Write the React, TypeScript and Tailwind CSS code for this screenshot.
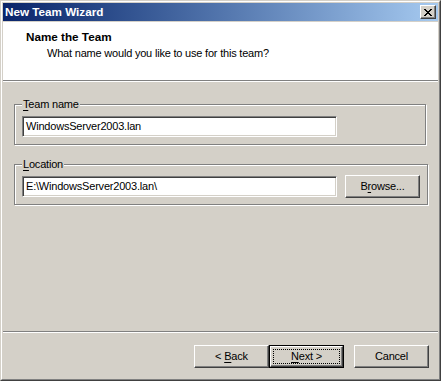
import type { ReactNode } from 'react';

function U({ children }: { children: ReactNode }) {
  return <span className="underline underline-offset-[2px]">{children}</span>;
}

function Btn({ children, isDefault, className = '' }: { children: ReactNode; isDefault?: boolean; className?: string }) {
  const face = (
    <button
      className={`flex items-center justify-center bg-[#d4d0c8] border border-t-white border-l-white border-r-[#404040] border-b-[#404040] shadow-[inset_-1px_-1px_0_#808080] text-[11px] tracking-[-0.2px] text-black whitespace-pre ${
        isDefault ? 'w-[73px] h-[21px] outline-1 outline-dotted outline-black outline-offset-[-4px]' : 'w-[75px] h-[23px]'
      } ${className}`}
    >
      <span>{children}</span>
    </button>
  );
  if (!isDefault) return face;
  return <div className={`border border-black ${className}`}>{face}</div>;
}

function TextBox({ value }: { value: string }) {
  return (
    <div className="w-[315px] h-[21px] bg-white border border-t-[#808080] border-l-[#808080] border-r-white border-b-white shadow-[inset_1px_1px_0_#404040,inset_-1px_-1px_0_#d4d0c8] pl-[3px] flex items-center text-[11px] tracking-[-0.2px] text-black">
      {value}
    </div>
  );
}

function Group({ label, children }: { label: ReactNode; children: ReactNode }) {
  return (
    <fieldset className="ml-[11px] mr-[12px] border border-[#808080] shadow-[1px_1px_0_#fff,inset_1px_1px_0_#fff] pl-[7px] pr-[7px]">
      <legend className="px-[1px] bg-[#d4d0c8] text-[11px] leading-[13px] tracking-[-0.2px] text-black">{label}</legend>
      {children}
    </fieldset>
  );
}

export default function App() {
  return (
    <div className="w-[441px] h-[381px] font-['Liberation_Sans',Arial,sans-serif] border border-t-[#d4d0c8] border-l-[#d4d0c8] border-r-[#404040] border-b-[#404040] bg-[#d4d0c8]">
      <div className="h-full border border-t-white border-l-white border-r-[#808080] border-b-[#808080] p-[1px] flex flex-col">
        {/* Title bar */}
        <div className="h-[18px] flex items-center justify-between bg-gradient-to-r from-[#0a246a] to-[#a6caf0] pl-[2px] pr-[2px]">
          <span className="text-white font-bold text-[11.7px] leading-none">New Team Wizard</span>
          <button className="w-[16px] h-[14px] bg-[#d4d0c8] border border-t-white border-l-white border-r-[#404040] border-b-[#404040] shadow-[inset_-1px_-1px_0_#808080] flex items-center justify-center">
            <svg width="8" height="7" viewBox="0 0 8 7" shapeRendering="crispEdges">
              <path d="M0 0h2v1H0zM6 0h2v1H6zM1 1h2v1H1zM5 1h2v1H5zM2 2h4v1H2zM3 3h2v1H3zM2 4h4v1H2zM1 5h2v1H1zM5 5h2v1H5zM0 6h2v1H0zM6 6h2v1H6z" fill="#000" />
            </svg>
          </button>
        </div>

        {/* Header */}
        <div className="mt-[1px] h-[58px] bg-white pt-[8px] text-black">
          <div className="pl-[23px] font-bold text-[11.7px] leading-[14px]">Name the Team</div>
          <div className="pl-[44px] mt-[2px] text-[11px] leading-[14px] tracking-[-0.2px]">What name would you like to use for this team?</div>
        </div>
        <div className="h-[1px] bg-[#808080]" />
        <div className="h-[1px] bg-white" />

        {/* Body */}
        <div className="flex-1 pt-[16px] flex flex-col">
          <Group label={<><U>T</U>eam name</>}>
            <div className="pt-[5px] pb-[7px]">
              <TextBox value="WindowsServer2003.lan" />
            </div>
          </Group>
          <div className="mt-[13px]">
            <Group label={<><U>L</U>ocation</>}>
              <div className="pt-[4px] pb-[6px] flex items-center gap-[8px]">
                <TextBox value="E:\WindowsServer2003.lan\" />
                <Btn>
                  B<U>r</U>owse...
                </Btn>
              </div>
            </Group>
          </div>
        </div>

        {/* Footer */}
        <div className="h-[1px] bg-[#808080]" />
        <div className="h-[1px] bg-white" />
        <div className="h-[45px] pt-[12px] pr-[9px] flex justify-end items-start">
          <Btn>
            {'< '}<U>B</U>ack
          </Btn>
          <Btn isDefault>
            <U>N</U>{'ext >'}
          </Btn>
          <Btn className="ml-[10px]">Cancel</Btn>
        </div>
      </div>
    </div>
  );
}
